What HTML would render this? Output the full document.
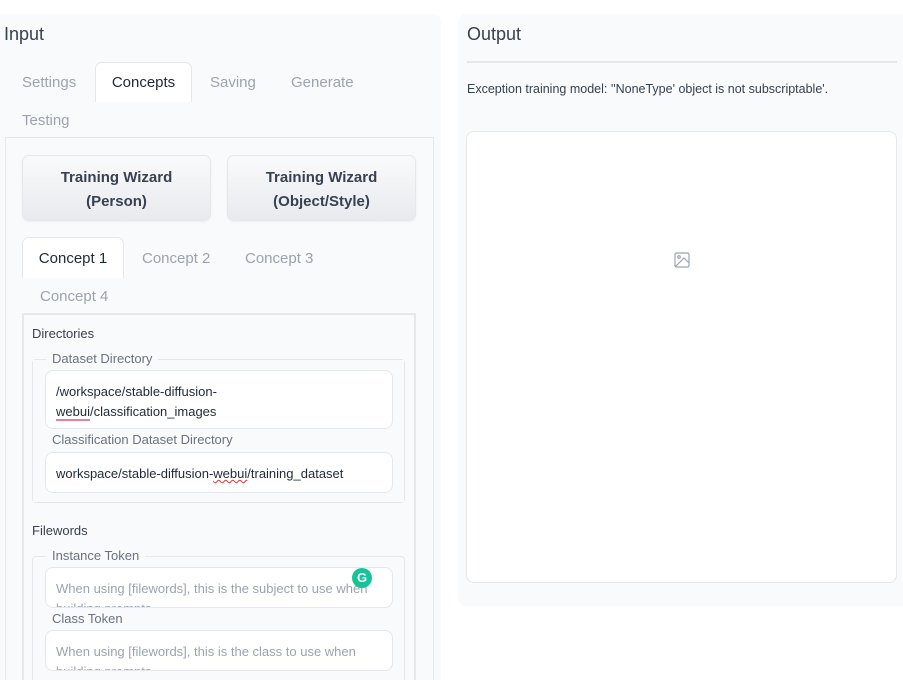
<!DOCTYPE html>
<html style="width:903px;height:680px;overflow:hidden"><head><style>
*{box-sizing:border-box;margin:0;padding:0}
body{width:903px;height:680px;overflow:hidden;background:#fff;font-family:"Liberation Sans",sans-serif;color:#374151;position:relative}
.a{position:absolute}
.panel{background:#f9fafb;border-radius:8px}
.tab{position:absolute;font-size:15px;color:#9ca3af}
.tabsel{position:absolute;background:#fff;border:1px solid #e5e7eb;border-bottom:none;border-radius:7px 7px 0 0;font-size:15px;color:#1f2937;text-align:center}
.btn{position:absolute;background:linear-gradient(#f9fafb,#e9eaee);border:1px solid #e5e7eb;border-radius:7px;font-size:15px;font-weight:bold;color:#374151;text-align:center;line-height:24px;padding-top:10px;box-shadow:0 1px 2px rgba(0,0,0,.05)}
.inp{position:absolute;background:#fff;border:1px solid #e5e7eb;border-radius:8px;font-size:13px;color:#1f2937;padding:11px 10px 10px;line-height:20px;overflow:hidden}
.lbl{position:absolute;font-size:13px;color:#6b7280;background:#f9fafb;padding:0 6px}
.ph{color:#9ca3af}
</style></head><body>
<div class="a panel" style="left:-8px;top:14px;width:449px;height:680px"></div>
<div class="a panel" style="left:458px;top:14px;width:452px;height:592px"></div>

<div class="a" style="left:4px;top:24px;font-size:18px;color:#374151">Input</div>
<div class="tab" style="left:22px;top:74px">Settings</div>
<div class="tabsel" style="left:95px;top:62px;width:97px;height:40px;line-height:40px">Concepts</div>
<div class="tab" style="left:210px;top:74px">Saving</div>
<div class="tab" style="left:291px;top:74px">Generate</div>
<div class="tab" style="left:22px;top:112px">Testing</div>

<div class="a" style="left:5px;top:137px;width:429px;height:560px;border:1px solid #e5e7eb;background:#f9fafb"></div>
<div class="btn" style="left:22px;top:155px;width:189px;height:66px">Training Wizard<br>(Person)</div>
<div class="btn" style="left:227px;top:155px;width:189px;height:66px">Training Wizard<br>(Object/Style)</div>

<div class="tabsel" style="left:22px;top:237px;width:102px;height:41px;line-height:42px">Concept 1</div>
<div class="tab" style="left:142px;top:250px">Concept 2</div>
<div class="tab" style="left:245px;top:250px">Concept 3</div>
<div class="tab" style="left:40px;top:288px">Concept 4</div>

<div class="a" style="left:22px;top:313px;width:394px;height:400px;border:2px solid #e5e7eb;background:#f9fafb"></div>
<div class="a" style="left:32px;top:326px;font-size:13px;color:#374151">Directories</div>
<div class="a" style="left:32px;top:359px;width:373px;height:144px;border:1px solid #e5e7eb;border-radius:4px;background:#fff"></div>
<div class="a" style="left:33px;top:360px;width:371px;height:142px;background:#f9fafb"></div>
<div class="lbl" style="left:46px;top:351px">Dataset Directory</div>
<div class="inp" style="left:45px;top:370px;width:348px;height:59px">/workspace/stable-diffusion-<br><span style="border-bottom:2px solid #e8829a">webui</span>/classification_images</div>
<div class="lbl" style="left:46px;top:432px">Classification Dataset Directory</div>
<div class="inp" style="left:45px;top:452px;width:348px;height:41px">workspace/stable-diffusion-<span style="text-decoration:underline wavy #d33;text-decoration-thickness:1px">webui</span>/training_dataset</div>

<div class="a" style="left:32px;top:523px;font-size:13px;color:#374151">Filewords</div>
<div class="a" style="left:32px;top:556px;width:373px;height:140px;border:1px solid #e5e7eb;border-radius:4px;background:#f9fafb"></div>
<div class="lbl" style="left:46px;top:548px">Instance Token</div>
<div class="inp ph" style="left:45px;top:567px;width:348px;height:41px">When using [filewords], this is the subject to use when building prompts</div>
<div class="a" style="left:352px;top:568px;width:20px;height:20px;border-radius:50%;background:#15c39a;color:#fff;font-size:13px;font-weight:bold;text-align:center;line-height:20px">G</div>
<div class="lbl" style="left:46px;top:611px">Class Token</div>
<div class="inp ph" style="left:45px;top:630px;width:348px;height:41px">When using [filewords], this is the class to use when building prompts</div>

<div class="a" style="left:467px;top:24px;font-size:18px;color:#374151">Output</div>
<div class="a" style="left:467px;top:61px;width:430px;height:2px;background:#e5e7eb"></div>
<div class="a" style="left:467px;top:82px;font-size:12.5px;color:#374151">Exception training model: ''NoneType' object is not subscriptable'.</div>
<div class="a" style="left:466px;top:131px;width:431px;height:452px;background:#fff;border:1px solid #e5e7eb;border-radius:8px"></div>
<svg class="a" style="left:674px;top:252px" width="16" height="16" viewBox="0 0 16 16" fill="none" stroke="#9ca3af" stroke-width="1.2"><rect x="1" y="1" width="14" height="14" rx="1.5"/><circle cx="5" cy="5" r="1.3"/><path d="M1.5 14.5 L10 6 L14.5 10.5"/></svg>
</body></html>
